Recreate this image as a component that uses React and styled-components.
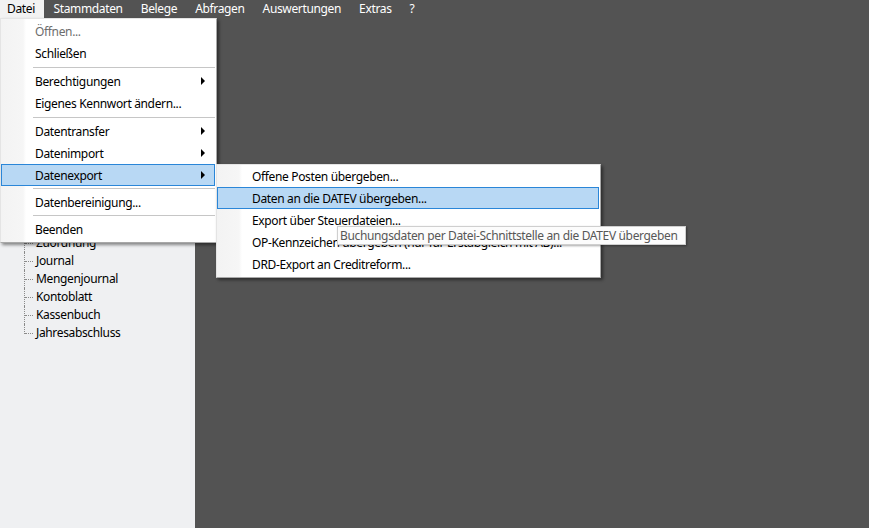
import React from "react";
import styled, { createGlobalStyle } from "styled-components";

const GlobalStyle = createGlobalStyle`
  html, body {
    margin: 0;
    padding: 0;
    background: #535353;
  }
  body {
    font-family: "Noto Sans", "Segoe UI", sans-serif;
    font-size: 12px;
    letter-spacing: -0.35px;
  }
`;

const mainMenu = ["Datei", "Stammdaten", "Belege", "Abfragen", "Auswertungen", "Extras", "?"];

const dateiItems = [
  { label: "Öffnen...", disabled: true },
  { label: "Schließen" },
  { sep: 6 },
  { label: "Berechtigungen", sub: true },
  { label: "Eigenes Kennwort ändern..." },
  { sep: 6 },
  { label: "Datentransfer", sub: true },
  { label: "Datenimport", sub: true },
  { label: "Datenexport", sub: true, active: true },
  { sep: 5 },
  { label: "Datenbereinigung..." },
  { sep: 5 },
  { label: "Beenden" },
];

const exportItems = [
  { label: "Offene Posten übergeben..." },
  { label: "Daten an die DATEV übergeben...", active: true },
  { label: "Export über Steuerdateien..." },
  { label: "OP-Kennzeichen übergeben (nur für Erstabgleich mit AB)..." },
  { label: "DRD-Export an Creditreform..." },
];

const treeItems = [
  "Buchen",
  "Stapelbuchungen",
  "Dauerbuchungen",
  "Kontenplan",
  "Kostenstellen",
  "Summen und Salden",
  "Offene Posten",
  "Mahnwesen",
  "Zahlungsverkehr",
  "Umsatzsteuer",
  "Auswertungen",
  "Anlagen",
  "Zuordnung",
  "Journal",
  "Mengenjournal",
  "Kontoblatt",
  "Kassenbuch",
  "Jahresabschluss",
];

const Window = styled.div`
  position: relative;
  width: 869px;
  height: 528px;
  display: flex;
  flex-direction: column;
  overflow: hidden;
  background: #535353;
`;

const MenuBar = styled.div`
  display: flex;
  height: 18px;
  background: #535353;
`;

const MenuBarItem = styled.div`
  display: flex;
  align-items: center;
  padding: ${(p) => (p.$first ? "0 9px 0 7px" : "0 8.5px")};
  margin-left: ${(p) => (p.$first ? "0" : "1px")};
  color: ${(p) => (p.$open ? "#000" : "#fff")};
  background: ${(p) => (p.$open ? "#f2f2f2" : "transparent")};
  line-height: 18px;
`;

const Body = styled.div`
  flex: 1;
  display: flex;
`;

const TreePanel = styled.div`
  width: 195px;
  background: #eff0f2;
`;

const TreeList = styled.ul`
  list-style: none;
  margin: 0;
  padding: 0 0 0 36px;
`;

const TreeItem = styled.li`
  position: relative;
  height: 18px;
  line-height: 18px;
  color: #000;

  &::before {
    content: "";
    position: absolute;
    left: -11px;
    top: 9px;
    width: 8px;
    border-top: 1px dotted #8a8a8a;
  }

  &::after {
    content: "";
    position: absolute;
    left: -12px;
    top: 0;
    height: ${(p) => (p.$last ? "10px" : "18px")};
    border-left: 1px dotted #8a8a8a;
  }
`;

const Workspace = styled.div`
  flex: 1;
  background: #535353;
`;

const Menu = styled.div`
  position: absolute;
  left: ${(p) => p.$left}px;
  top: ${(p) => p.$top}px;
  width: ${(p) => p.$width}px;
  box-sizing: border-box;
  padding: ${(p) => p.$padTop}px 0 2px;
  background: linear-gradient(to right, #f3f3f3 0, #f6f6f6 22px, #ffffff 25px);
  border: 1px solid #a8a8a8;
  border-left-color: #e4e4e4;
  border-top-color: #e4e4e4;
  box-shadow: 2px 2px 3px rgba(0, 0, 0, 0.45);
`;

const MenuRow = styled.div`
  display: flex;
  align-items: center;
  justify-content: space-between;
  height: 22px;
  box-sizing: border-box;
  margin-right: 1px;
  padding: 0 9px 0 ${(p) => p.$indent}px;
  color: ${(p) => (p.$disabled ? "#6d6d6d" : "#000")};
  background: ${(p) => (p.$active ? "#b8d8f4" : "transparent")};
  border: 1px solid ${(p) => (p.$active ? "#2a86d8" : "transparent")};
  white-space: nowrap;
`;

const Separator = styled.div`
  height: ${(p) => p.$h}px;
  display: flex;
  align-items: center;
  padding-left: 32px;
  padding-right: 1px;

  &::after {
    content: "";
    flex: 1;
    border-top: 1px solid #c6c6c6;
  }
`;

const Arrow = styled.span`
  width: 0;
  height: 0;
  border-left: 4px solid #000;
  border-top: 4px solid transparent;
  border-bottom: 4px solid transparent;
`;

const Tooltip = styled.div`
  position: absolute;
  left: 337px;
  top: 226px;
  height: 19px;
  line-height: 18px;
  padding: 0 7px 0 2px;
  box-sizing: border-box;
  background: #fcfcfc;
  color: #575757;
  border: 1px solid #cfcfcf;
  box-shadow: 1px 1px 2px rgba(0, 0, 0, 0.35);
  white-space: nowrap;
`;

function MenuList({ items, left, top, width, indent, padTop }) {
  return (
    <Menu $left={left} $top={top} $width={width} $padTop={padTop}>
      {items.map((it, i) =>
        it.sep ? (
          <Separator key={i} $h={it.sep} />
        ) : (
          <MenuRow key={i} $indent={indent} $active={it.active} $disabled={it.disabled}>
            <span>{it.label}</span>
            {it.sub && <Arrow />}
          </MenuRow>
        )
      )}
    </Menu>
  );
}

export default function App() {
  return (
    <>
      <GlobalStyle />
      <Window>
        <MenuBar>
          {mainMenu.map((m, i) => (
            <MenuBarItem key={m} $first={i === 0} $open={i === 0}>
              {m}
            </MenuBarItem>
          ))}
        </MenuBar>
        <Body>
          <TreePanel>
            <TreeList>
              {treeItems.map((t, i) => (
                <TreeItem key={t} $last={i === treeItems.length - 1}>
                  {t}
                </TreeItem>
              ))}
            </TreeList>
          </TreePanel>
          <Workspace />
        </Body>

        <MenuList items={dateiItems} left={0} top={18} width={217} indent={33} padTop={1} />
        <MenuList items={exportItems} left={216} top={164} width={385} indent={34} padTop={0} />
        <Tooltip>Buchungsdaten per Datei-Schnittstelle an die DATEV übergeben</Tooltip>
      </Window>
    </>
  );
}
